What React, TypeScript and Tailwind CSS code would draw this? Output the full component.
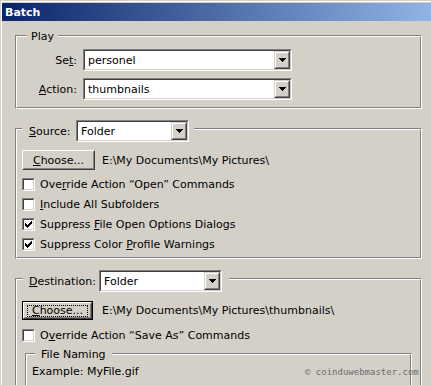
import React from "react";

function U({ children }: { children: React.ReactNode }) {
  return <span className="underline underline-offset-1 decoration-1">{children}</span>;
}

function Arrow() {
  return (
    <svg width="7" height="4" viewBox="0 0 7 4" shapeRendering="crispEdges">
      <rect x="0" y="0" width="7" height="1" fill="#000" />
      <rect x="1" y="1" width="5" height="1" fill="#000" />
      <rect x="2" y="2" width="3" height="1" fill="#000" />
      <rect x="3" y="3" width="1" height="1" fill="#000" />
    </svg>
  );
}

function Select({ value, w }: { value: string; w: string }) {
  return (
    <div className={`${w} h-[22px] border border-t-[#808080] border-l-[#808080] border-r-white border-b-white shrink-0`}>
      <div className="h-full border border-t-[#404040] border-l-[#404040] border-r-[#d4d0c8] border-b-[#d4d0c8] bg-white flex items-center">
        <div className="flex-1 pl-[3px] leading-none">{value}</div>
        <div className="w-[16px] h-full border border-t-[#d4d0c8] border-l-[#d4d0c8] border-r-[#404040] border-b-[#404040]">
          <div className="h-full border border-t-white border-l-white border-r-[#808080] border-b-[#808080] bg-[#d4d0c8] flex items-center justify-center">
            <Arrow />
          </div>
        </div>
      </div>
    </div>
  );
}

function Check({ checked }: { checked?: boolean }) {
  return (
    <div className="w-[13px] h-[13px] border border-t-[#808080] border-l-[#808080] border-r-white border-b-white shrink-0">
      <div className="h-full border border-t-[#404040] border-l-[#404040] border-r-[#d4d0c8] border-b-[#d4d0c8] bg-white flex items-center justify-center">
        {checked && (
          <svg width="7" height="7" viewBox="0 0 7 7" shapeRendering="crispEdges">
            <path d="M0 2H1V3H2V4H3V3H4V2H5V1H6V0H7V3H6V4H5V5H4V6H3V7H2V6H1V5H0Z" fill="#000" />
          </svg>
        )}
      </div>
    </div>
  );
}

function CheckRow({ checked, children }: { checked?: boolean; children: React.ReactNode }) {
  return (
    <div className="h-[20px] flex items-center">
      <Check checked={checked} />
      <span className="ml-[5px] leading-none">{children}</span>
    </div>
  );
}

function Btn({ children, def, w, h }: { children: React.ReactNode; def?: boolean; w: string; h: string }) {
  const face = (
    <div className="h-full border border-t-white border-l-white border-r-[#404040] border-b-[#404040]">
      <div className="h-full border border-t-[#d4d0c8] border-l-[#d4d0c8] border-r-[#808080] border-b-[#808080] flex items-center justify-center">
        {def ? (
          <div className="border border-dotted border-black px-[4px] h-[12px] flex items-center leading-none">{children}</div>
        ) : (
          <span className="leading-none">{children}</span>
        )}
      </div>
    </div>
  );
  return (
    <div className={`${w} ${h} shrink-0 bg-[#d4d0c8]`}>
      {def ? <div className="h-full border border-black">{face}</div> : face}
    </div>
  );
}

function Etched({ className, children }: { className: string; children: React.ReactNode }) {
  return (
    <div className={`relative border border-t-[#808080] border-l-[#808080] border-r-white border-b-white ${className}`}>
      <div className="h-full border border-t-white border-l-white border-r-[#808080] border-b-[#808080]">{children}</div>
    </div>
  );
}

export default function App() {
  return (
    <div className="relative w-[431px] h-[385px] overflow-hidden bg-[#d4d0c8] font-['Tahoma','DejaVu_Sans',sans-serif] text-[11px] text-black">
      <div className="ml-[1px] mt-[1px] h-[400px] border-l border-t border-white pt-[1px]">
        <div className="h-[18px] bg-[linear-gradient(to_right,#0a246a,#90b4e4)] flex items-center pl-[3px]">
          <span className="text-white font-bold text-[11px] leading-none">Batch</span>
        </div>

        <div className="pl-[13px]">
          {/* Play */}
          <Etched className="mt-[14px] w-[407px] h-[74px]">
            <div className="absolute left-[11px] top-[-7px] h-[14px] px-[4px] bg-[#d4d0c8] flex items-center leading-none">Play</div>
            <div className="pt-[12px] flex flex-col gap-[7px]">
              <div className="flex items-center">
                <div className="w-[60px] text-right leading-none">
                  Se<U>t</U>:
                </div>
                <div className="ml-[6px]">
                  <Select value="personel" w="w-[209px]" />
                </div>
              </div>
              <div className="flex items-center">
                <div className="w-[60px] text-right leading-none">
                  <U>A</U>ction:
                </div>
                <div className="ml-[6px]">
                  <Select value="thumbnails" w="w-[209px]" />
                </div>
              </div>
            </div>
          </Etched>

          {/* Source */}
          <Etched className="mt-[19px] w-[407px] h-[131px]">
            <div className="absolute left-[6px] top-[-9px] pl-[7px] pr-[5px] bg-[#d4d0c8] flex items-center">
              <div className="w-[47px] leading-none">
                <U>S</U>ource:
              </div>
              <Select value="Folder" w="w-[113px]" />
            </div>
            <div className="pt-[20px] pl-[5px]">
              <div className="flex items-center">
                <Btn w="w-[73px]" h="h-[20px]">
                  <U>C</U>hoose...
                </Btn>
                <span className="ml-[7px] leading-none">E:\My Documents\My Pictures\</span>
              </div>
              <div className="mt-[4px]">
                <CheckRow>
                  Ove<U>r</U>ride Action “Open” Commands
                </CheckRow>
                <CheckRow>
                  <U>I</U>nclude All Subfolders
                </CheckRow>
                <CheckRow checked>
                  Suppress <U>F</U>ile Open Options Dialogs
                </CheckRow>
                <CheckRow checked>
                  Suppress Color <U>P</U>rofile Warnings
                </CheckRow>
              </div>
            </div>
          </Etched>

          {/* Destination */}
          <Etched className="mt-[19px] w-[407px] h-[140px]">
            <div className="absolute left-[7px] top-[-9px] pl-[6px] pr-[7px] bg-[#d4d0c8] flex items-center">
              <div className="w-[70px] leading-none">
                <U>D</U>estination:
              </div>
              <Select value="Folder" w="w-[123px]" />
            </div>
            <div className="pt-[21px] pl-[5px]">
              <div className="flex items-center">
                <Btn def w="w-[71px]" h="h-[19px]">
                  <U>C</U>hoose...
                </Btn>
                <span className="ml-[9px] leading-none">E:\My Documents\My Pictures\thumbnails\</span>
              </div>
              <div className="mt-[5px]">
                <CheckRow>
                  O<U>v</U>erride Action “Save As” Commands
                </CheckRow>
              </div>
              <Etched className="mt-[8px] ml-[3px] w-[387px] h-[60px]">
                <div className="absolute left-[9px] top-[-7px] h-[14px] px-[6px] bg-[#d4d0c8] flex items-center leading-none">
                  File Naming
                </div>
                <div className="pt-[11px] pl-[5px] leading-none">Example: MyFile.gif</div>
              </Etched>
            </div>
          </Etched>
        </div>
      </div>
      <div className="absolute left-[305px] top-[368px] text-[9px] leading-none text-[#6b6b6b] font-['DejaVu_Sans_Mono',monospace]">
        © coinduwebmaster.com
      </div>
    </div>
  );
}
